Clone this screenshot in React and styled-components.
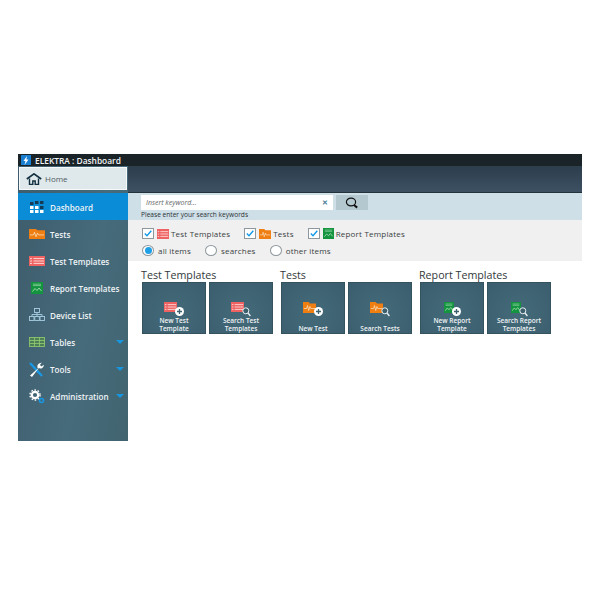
import React from 'react';
import styled, { createGlobalStyle } from 'styled-components';

const GlobalStyle = createGlobalStyle`
    html, body {
        margin: 0;
        padding: 0;
        background: #fff;
    }

    body {
        font-family: "Open Sans", "Liberation Sans", sans-serif;
    }
`;

const Page = styled.div`
    width: 600px;
    height: 600px;
    padding: 154px 18px 0;
    box-sizing: border-box;
`;

const Window = styled.div`
    width: 564px;
    height: 287px;
    display: flex;
    flex-direction: column;
`;

const TitleBar = styled.div`
    height: 12px;
    flex: none;
    display: flex;
    align-items: center;
    gap: 4px;
    padding-left: 3px;
    background: #1a2428;
    color: #f2f4f5;
    font-size: 8.4px;
    font-weight: 600;
    white-space: nowrap;
`;

const Bolt = styled.span`
    width: 10px;
    height: 10px;
    display: flex;
    align-items: center;
    justify-content: center;
    background: #1a7fd0;
`;

const Body = styled.div`
    flex: 1;
    display: flex;
    min-height: 0;
`;

const Sidebar = styled.aside`
    width: 110px;
    flex: none;
    display: flex;
    flex-direction: column;
    background: linear-gradient(100deg, #3e5c6c 0%, #466b7b 60%, #41646f 100%);
`;

const HomeTab = styled.div`
    height: 23px;
    margin: 1px 1px 3px;
    padding-left: 6px;
    display: flex;
    align-items: center;
    gap: 3px;
    box-sizing: border-box;
    background: #dfe9ec;
    border: 1px solid #f6f8f9;
    color: #4f5c62;
    font-size: 8px;
    font-weight: 500;
`;

const NavItem = styled.div`
    height: 27px;
    flex: none;
    box-sizing: border-box;
    display: flex;
    align-items: center;
    padding: 1px 0 0 10px;
    background: ${(p) => (p.$active ? '#0b8cd6' : 'transparent')};
    color: #eef3f5;
    font-size: 8.1px;
    font-weight: 600;
    white-space: nowrap;
`;

const NavIcon = styled.span`
    width: 17px;
    height: 16px;
    margin-right: 5px;
    display: flex;
    align-items: center;
    justify-content: center;
`;

const Caret = styled.span`
    margin-left: auto;
    margin-right: 4px;
    width: 0;
    height: 0;
    border-left: 4px solid transparent;
    border-right: 4px solid transparent;
    border-top: 4px solid #1695e0;
`;

const Main = styled.main`
    flex: 1;
    display: flex;
    flex-direction: column;
    min-width: 0;
`;

const Header = styled.div`
    height: 27px;
    flex: none;
    background: linear-gradient(180deg, #2c3d4c 0%, #3d5163 100%);
    border-bottom: 1px solid #24323c;
    box-sizing: border-box;
`;

const SearchBand = styled.div`
    height: 27px;
    flex: none;
    box-sizing: border-box;
    padding: 2px 0 0 13px;
    background: #cfdfe7;
`;

const SearchRow = styled.div`
    display: flex;
    gap: 3px;
`;

const SearchBox = styled.div`
    width: 192px;
    height: 15px;
    box-sizing: border-box;
    padding: 0 5px;
    display: flex;
    align-items: center;
    justify-content: space-between;
    background: #fff;
    color: #666;
    font-size: 7px;
    font-style: italic;
`;

const SearchClose = styled.span`
    color: #4a7f9c;
    font-size: 7px;
    font-style: normal;
    font-weight: 700;
`;

const SearchButton = styled.div`
    width: 32px;
    height: 15px;
    display: flex;
    align-items: center;
    justify-content: center;
    background: #b3c8cf;
`;

const Hint = styled.div`
    margin-top: 0;
    color: #2c3134;
    font-size: 6.6px;
    line-height: 9px;
`;

const FilterBand = styled.div`
    height: 41px;
    flex: none;
    box-sizing: border-box;
    padding: 6px 0 0 14px;
    background: #f0f0f0;
`;

const FilterRow = styled.div`
    display: flex;
    align-items: center;
    height: 15px;
    margin-bottom: ${(p) => p.$gap || 0}px;
    color: #3a3f42;
    font-size: 8px;
    letter-spacing: 0.2px;
    white-space: nowrap;
`;

const CheckItem = styled.div`
    display: flex;
    align-items: center;
    margin-right: 14px;
`;

const CheckBox = styled.span`
    width: 12px;
    height: 11px;
    margin-right: 3px;
    box-sizing: border-box;
    display: flex;
    align-items: center;
    justify-content: center;
    background: #fff;
    border: 1px solid #8d979c;
`;

const FilterIcon = styled.span`
    margin-right: 2px;
    display: flex;
`;

const RadioItem = styled.div`
    display: flex;
    align-items: center;
    margin-right: 14px;
`;

const Radio = styled.span`
    width: 12px;
    height: 11px;
    margin-right: 4px;
    box-sizing: border-box;
    display: flex;
    align-items: center;
    justify-content: center;
    background: #fff;
    border: 1px solid #8d979c;
    border-radius: 50%;

    &::after {
        content: '';
        display: ${(p) => (p.$on ? 'block' : 'none')};
        width: 7px;
        height: 7px;
        border-radius: 50%;
        background: #1e9fe6;
    }
`;

const Groups = styled.div`
    display: flex;
    gap: 8px;
    padding: 8px 0 0 14px;
`;

const Group = styled.section`
    display: flex;
    flex-direction: column;
`;

const GroupTitle = styled.h3`
    margin: 0 0 0 -1px;
    height: 13px;
    color: #33383b;
    font-size: 10.7px;
    font-weight: 400;
    line-height: 13px;
    white-space: nowrap;
`;

const Tiles = styled.div`
    display: flex;
    gap: 3px;
`;

const Tile = styled.div`
    width: 64px;
    height: 52px;
    box-sizing: border-box;
    padding-top: 19px;
    display: flex;
    flex-direction: column;
    align-items: center;
    background: radial-gradient(circle at 50% 60%, #446a7a 0%, #3b5e6e 100%);
    border: 1px solid #35525f;
    color: #f0f4f5;
    font-size: 6.5px;
    font-weight: 600;
    line-height: 7.5px;
    text-align: center;
    white-space: nowrap;
`;

const TileIcon = styled.span`
    height: 15px;
    flex: none;
    display: flex;
    margin-bottom: ${(p) => (p.$single ? 8 : 0)}px;
`;

const BoltIcon = () => (
    <svg width="8" height="9" viewBox="0 0 8 9">
        <path d="M5 0 1.5 5h2L2.5 9 6.5 3.5H4.4z" fill="#fff" />
    </svg>
);

const HouseIcon = () => (
    <svg width="16" height="12" viewBox="0 0 16 12">
        <path d="M.8 6 8 .9 15.2 6" fill="none" stroke="#12303f" strokeWidth="1.7" />
        <path d="M3.5 5.5v6h3.3V8h2.4v3.5h3.3v-6" fill="none" stroke="#12303f" strokeWidth="1.4" />
    </svg>
);

const GridIcon = () => (
    <svg width="14" height="12" viewBox="0 0 14 12" fill="#fff">
        <rect width="3.5" height="3" x="0" y="1" fill="#163a54" />
        <rect width="3.5" height="3" x="5" y="0" fill="#163a54" />
        <rect width="3.5" height="3" x="10" y="0" fill="#163a54" />
        <rect width="3.5" height="3" x="0" y="5" />
        <rect width="3.5" height="3" x="5" y="5" />
        <rect width="3.5" height="3" x="10" y="5" fill="#163a54" />
        <rect width="3.5" height="3" x="0" y="9" />
        <rect width="3.5" height="3" x="5" y="9" />
        <rect width="3.5" height="3" x="10" y="9" />
    </svg>
);

const FolderIcon = ({ w = 16, h = 11 }) => (
    <svg width={w} height={h} viewBox="0 0 16 11" preserveAspectRatio="none">
        <path d="M0 0h7l1.5 1.5H16V11H0z" fill="#ef7f12" />
        <path d="M1 6.5h3.5l1-3 1.5 5 1.5-4 1 2h5.5" fill="none" stroke="#fbe2c4" strokeWidth=".8" />
    </svg>
);

const ListIcon = ({ w = 16, h = 10 }) => (
    <svg width={w} height={h} viewBox="0 0 16 10" preserveAspectRatio="none">
        <rect width="16" height="10" fill="#ef6262" />
        <path d="M4.5 2.6H15M4.5 5H15M4.5 7.4H15M1 2.6h2M1 5h2M1 7.4h2" stroke="#fde4e1" strokeWidth=".9" />
    </svg>
);

const ReportIcon = ({ w = 12, h = 12 }) => (
    <svg width={w} height={h} viewBox="0 0 12 12" preserveAspectRatio="none">
        <rect width="12" height="12" fill="#14943f" />
        <path d="M2 2.2h8M2 3.6h8" stroke="#9ed8ae" strokeWidth=".7" />
        <path d="M1.5 9.5 4 6.5 6 8.5 8 6l2.5 3" fill="none" stroke="#b8e6c3" strokeWidth=".8" />
    </svg>
);

const NetworkIcon = () => (
    <svg width="16" height="14" viewBox="0 0 16 14" fill="none" stroke="#a9cfe4" strokeWidth=".9">
        <rect x="5.5" y=".5" width="5" height="4" />
        <rect x=".5" y="8.5" width="4.5" height="4" />
        <rect x="5.8" y="8.5" width="4.5" height="4" />
        <rect x="11" y="8.5" width="4.5" height="4" />
        <path d="M8 4.5v4M3 8.5V6.5h10v2" />
    </svg>
);

const TableIcon = () => (
    <svg width="16" height="10" viewBox="0 0 16 10" fill="none" stroke="#8fc46f" strokeWidth=".9">
        <rect x=".5" y=".5" width="15" height="9" fill="#4a7f57" />
        <path d="M5.5.5v9M10.5.5v9M.5 3.5h15M.5 6.5h15" />
    </svg>
);

const ToolsIcon = () => (
    <svg width="16" height="15" viewBox="0 0 16 15">
        <path d="M1 1l12 13" stroke="#1a97e2" strokeWidth="2.4" />
        <path d="M1 13.5 9 6.5a3.4 3.4 0 0 1 1-5l2.8-.9-1.9 2.4 1.5 1.6 2.4-1.9a3.4 3.4 0 0 1-5 3.4L3 15z" fill="#fff" />
    </svg>
);

const GearsIcon = () => (
    <svg width="16" height="15" viewBox="0 0 16 15" fill="none">
        <circle cx="6" cy="6" r="3.2" stroke="#fff" strokeWidth="2.2" />
        <circle cx="6" cy="6" r="5" stroke="#fff" strokeWidth="1.4" strokeDasharray="1.6 1.6" />
        <circle cx="12.5" cy="11.5" r="2" stroke="#1a97e2" strokeWidth="1.6" />
    </svg>
);

const TickIcon = () => (
    <svg width="8" height="7" viewBox="0 0 8 7">
        <path d="M.8 3.6 3 5.8 7.3.8" fill="none" stroke="#129ae6" strokeWidth="1.4" />
    </svg>
);

const LensIcon = () => (
    <svg width="14" height="12" viewBox="0 0 14 12" fill="none">
        <ellipse cx="6" cy="5" rx="4.6" ry="3.8" stroke="#111" strokeWidth="1.2" />
        <path d="M9 8l3.2 2.6" stroke="#111" strokeWidth="2" />
    </svg>
);

const PlusBadge = () => (
    <svg width="9" height="9" viewBox="0 0 9 9" style={{ margin: '5px 0 0 -2px' }}>
        <circle cx="4.5" cy="4.5" r="4.5" fill="#fff" />
        <path d="M4.5 2v5M2 4.5h5" stroke="#3c5f6e" strokeWidth="1.3" />
    </svg>
);

const LensBadge = () => (
    <svg width="9" height="10" viewBox="0 0 9 10" fill="none" style={{ margin: '5px 0 0 -2px' }}>
        <circle cx="3.8" cy="3.8" r="3" fill="#3c5f6e" stroke="#e8f0f2" />
        <path d="M6 6l2.4 3" stroke="#e8f0f2" strokeWidth="1.3" />
    </svg>
);

const NAV_ITEMS = [
    { label: 'Dashboard', icon: <GridIcon />, active: true },
    { label: 'Tests', icon: <FolderIcon w={16} h={10} /> },
    { label: 'Test Templates', icon: <ListIcon /> },
    { label: 'Report Templates', icon: <ReportIcon /> },
    { label: 'Device List', icon: <NetworkIcon /> },
    { label: 'Tables', icon: <TableIcon />, caret: true },
    { label: 'Tools', icon: <ToolsIcon />, caret: true },
    { label: 'Administration', icon: <GearsIcon />, caret: true },
];

const GROUPS = [
    {
        title: 'Test Templates',
        Icon: ListIcon,
        iconSize: [13, 10],
        tiles: [['New Test', 'Template'], ['Search Test', 'Templates']],
    },
    {
        title: 'Tests',
        Icon: FolderIcon,
        iconSize: [13, 11],
        tiles: [['New Test'], ['Search Tests']],
    },
    {
        title: 'Report Templates',
        Icon: ReportIcon,
        iconSize: [10, 11],
        tiles: [['New Report', 'Template'], ['Search Report', 'Templates']],
    },
];

function App() {
    return (
        <Page>
            <GlobalStyle />
            <Window>
                <TitleBar>
                    <Bolt><BoltIcon /></Bolt>
                    ELEKTRA : Dashboard
                </TitleBar>
                <Body>
                    <Sidebar>
                        <HomeTab><HouseIcon />Home</HomeTab>
                        {NAV_ITEMS.map((item) => (
                            <NavItem key={item.label} $active={item.active}>
                                <NavIcon>{item.icon}</NavIcon>
                                {item.label}
                                {item.caret && <Caret />}
                            </NavItem>
                        ))}
                    </Sidebar>
                    <Main>
                        <Header />
                        <SearchBand>
                            <SearchRow>
                                <SearchBox>
                                    Insert keyword...
                                    <SearchClose>✕</SearchClose>
                                </SearchBox>
                                <SearchButton><LensIcon /></SearchButton>
                            </SearchRow>
                            <Hint>Please enter your search keywords</Hint>
                        </SearchBand>
                        <FilterBand>
                            <FilterRow $gap={2}>
                                <CheckItem>
                                    <CheckBox><TickIcon /></CheckBox>
                                    <FilterIcon><ListIcon w={12} h={10} /></FilterIcon>
                                    Test Templates
                                </CheckItem>
                                <CheckItem>
                                    <CheckBox><TickIcon /></CheckBox>
                                    <FilterIcon><FolderIcon w={12} h={10} /></FilterIcon>
                                    Tests
                                </CheckItem>
                                <CheckItem>
                                    <CheckBox><TickIcon /></CheckBox>
                                    <FilterIcon><ReportIcon w={11} h={11} /></FilterIcon>
                                    Report Templates
                                </CheckItem>
                            </FilterRow>
                            <FilterRow>
                                <RadioItem><Radio $on />all items</RadioItem>
                                <RadioItem><Radio />searches</RadioItem>
                                <RadioItem><Radio />other items</RadioItem>
                            </FilterRow>
                        </FilterBand>
                        <Groups>
                            {GROUPS.map(({ title, Icon, iconSize, tiles }) => (
                                <Group key={title}>
                                    <GroupTitle>{title}</GroupTitle>
                                    <Tiles>
                                        {tiles.map((lines, i) => (
                                            <Tile key={lines.join(' ')}>
                                                <TileIcon $single={lines.length === 1}>
                                                    <Icon w={iconSize[0]} h={iconSize[1]} />
                                                    {i === 0 ? <PlusBadge /> : <LensBadge />}
                                                </TileIcon>
                                                {lines.map((line) => <span key={line}>{line}</span>)}
                                            </Tile>
                                        ))}
                                    </Tiles>
                                </Group>
                            ))}
                        </Groups>
                    </Main>
                </Body>
            </Window>
        </Page>
    );
}

export default App;
